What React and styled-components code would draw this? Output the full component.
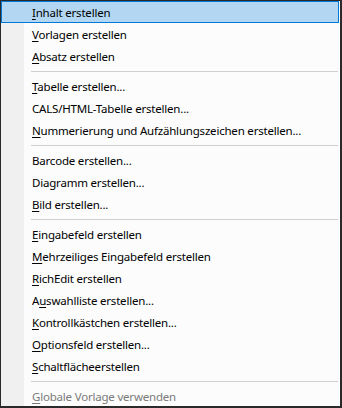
import styled, { createGlobalStyle } from "styled-components";

const GlobalStyle = createGlobalStyle`
  html, body {
    margin: 0;
    padding: 0;
    background: #ffffff;
  }
`;

const Menu = styled.div`
  width: 342px;
  height: 408px;
  box-sizing: border-box;
  border-style: solid;
  border-color: #2a2a2a;
  border-width: 1px 2px 2px 1px;
  background: linear-gradient(to right, #f0f0f0 0, #f0f0f0 23px, #fcfcfc 23px);
  display: flex;
  flex-direction: column;
  font-family: "Noto Sans", "Liberation Sans", sans-serif;
  font-size: 11.5px;
  letter-spacing: -0.2px;
  color: #000000;
  overflow: hidden;
`;

const Item = styled.div`
  height: 22px;
  flex: none;
  display: flex;
  align-items: center;
  padding-left: 30px;
  box-sizing: border-box;
  margin-right: 1px;
  color: ${(p) => (p.$disabled ? "#7a7a7a" : "#000000")};
  background: ${(p) => (p.$active ? "#b3d7f3" : "transparent")};
  border: 1px solid ${(p) => (p.$active ? "#0078d7" : "transparent")};
  white-space: nowrap;
`;

const Key = styled.span`
  text-decoration: underline;
  text-underline-offset: 2px;
`;

const Separator = styled.div`
  flex: none;
  height: 8px;
  display: flex;
  align-items: center;
  padding: 0 2px 0 30px;

  &::after {
    content: "";
    flex: 1;
    height: 1px;
    background: #cfcfcf;
  }
`;

const Group = styled.div`
  display: contents;
`;

// [underlined letter, rest of label, letter before the underlined one]
const groups = [
  [
    ["I", "nhalt erstellen"],
    ["V", "orlagen erstellen"],
    ["A", "bsatz erstellen"],
  ],
  [
    ["T", "abelle erstellen..."],
    ["", "CALS/HTML-Tabelle erstellen..."],
    ["N", "ummerierung und Aufzählungszeichen erstellen..."],
  ],
  [
    ["", "Barcode erstellen..."],
    ["", "Diagramm erstellen..."],
    ["B", "ild erstellen..."],
  ],
  [
    ["E", "ingabefeld erstellen"],
    ["M", "ehrzeiliges Eingabefeld erstellen"],
    ["R", "ichEdit erstellen"],
    ["u", "swahlliste erstellen...", "A"],
    ["K", "ontrollkästchen erstellen..."],
    ["O", "ptionsfeld erstellen..."],
    ["S", "chaltflächeerstellen"],
  ],
  [["G", "lobale Vorlage verwenden"]],
];

function Label({ entry }) {
  const [key, rest, before = ""] = entry;
  return (
    <span>
      {before}
      {key && <Key>{key}</Key>}
      {rest}
    </span>
  );
}

export default function App() {
  return (
    <>
      <GlobalStyle />
      <Menu>
        {groups.map((group, gi) => (
          <Group key={gi}>
            {gi > 0 && <Separator />}
            {group.map((entry, i) => (
              <Item
                key={i}
                $active={gi === 0 && i === 0}
                $disabled={gi === groups.length - 1}
              >
                <Label entry={entry} />
              </Item>
            ))}
          </Group>
        ))}
      </Menu>
    </>
  );
}
